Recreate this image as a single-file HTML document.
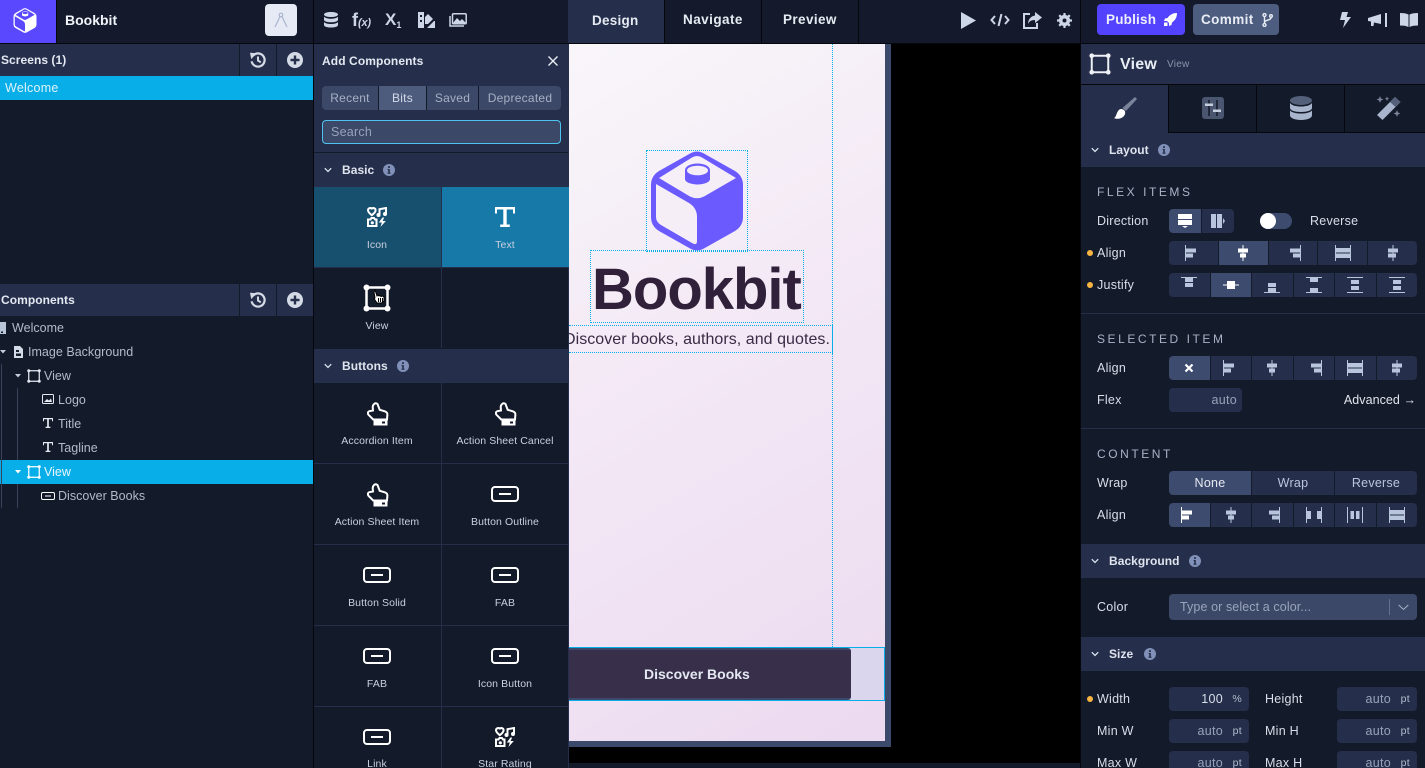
<!DOCTYPE html>
<html><head><meta charset="utf-8"><title>Bookbit</title>
<style>
*{box-sizing:border-box;margin:0;padding:0}
html,body{width:1425px;height:768px;overflow:hidden;background:#131a2a}
body{position:relative;font-family:"Liberation Sans",sans-serif;color:#d8deea;font-size:12.5px}
.a,.t,svg.p{position:absolute}
.t{white-space:nowrap;line-height:16px;letter-spacing:.25px}
.t.b{font-weight:700;letter-spacing:.05px}
.h{background:#252f4b;position:absolute}
.t.lbl{color:#a9b3c7;letter-spacing:2.55px;font-size:12px}
.seg{position:absolute;display:flex;gap:1px;border-radius:4px;overflow:hidden;height:24px;left:1169px;width:248px}
.seg>div{flex:1;background:#252f4b;display:flex;align-items:center;justify-content:center;color:#b9c5dc;font-size:12.5px;letter-spacing:.25px}
.seg>div.on{background:#3d4b6e;color:#fff}
.seg svg{width:16px;height:16px}
.inp{position:absolute;height:24px;background:#252f4b;border-radius:4px;color:#98a3b8;font-size:12.5px;line-height:25px;letter-spacing:.3px}
.inp span{position:absolute;top:0;white-space:nowrap}
.inp i{position:absolute;top:0;right:7px;font-style:normal;font-size:10.5px;color:#b4bccb}
.tl{position:absolute;width:128px;text-align:center;font-size:10.5px;letter-spacing:.1px;color:#c9d0de;line-height:14px}
.ln{position:absolute;background:#252f4b}
.dot{position:absolute;width:6px;height:6px;border-radius:3px;background:#f8b544;left:1087px}
.t.tr{color:#b3bbcb;letter-spacing:.02px}
</style></head><body>
<svg width="0" height="0" style="position:absolute"><defs>
<symbol id="hist" viewBox="0 0 18 18"><path d="M4 3.600A7.400 7.400 0 1 1 1.800 10.500" fill="none" stroke="currentColor" stroke-width="2.500"/><path d="M0 .8L7.500 1.400 1.400 8Z" fill="currentColor"/><path d="M9 5V9.600L12.200 11.600" fill="none" stroke="currentColor" stroke-width="2.200"/></symbol>
<symbol id="plus" viewBox="0 0 16 16"><path fill-rule="evenodd" d="M8 0a8 8 0 1 1 0 16A8 8 0 0 1 8 0ZM6.800 3.500V6.800H3.500V9.200H6.800V12.500H9.200V9.200H12.500V6.800H9.200V3.500Z" fill="currentColor"/></symbol>
<symbol id="info" viewBox="0 0 12 12"><path fill-rule="evenodd" d="M6 0a6 6 0 1 1 0 12A6 6 0 0 1 6 0ZM5 2.200V3.900H7V2.200ZM4.600 5V6H5.200V8.600H4.500V9.700H7.500V8.600H6.800V5Z" fill="#8090b8"/></symbol>
<symbol id="chev" viewBox="0 0 8 6"><path d="M.8 1.200L4 4.400 7.200 1.200" fill="none" stroke="#dde3ee" stroke-width="1.300"/></symbol>
<symbol id="view" viewBox="0 0 28 28"><rect x="3.500" y="3.500" width="21" height="21" fill="none" stroke="currentColor" stroke-width="2.500"/><circle cx="3.500" cy="3.500" r="3" fill="currentColor"/><circle cx="24.500" cy="3.500" r="3" fill="currentColor"/><circle cx="3.500" cy="24.500" r="3" fill="currentColor"/><circle cx="24.500" cy="24.500" r="3" fill="currentColor"/></symbol>
<symbol id="tee" viewBox="0 0 20 20"><path d="M0 0H20V6.500H18V2.500H11.700V17.500H14.800V20H5.200V17.500H8.300V2.500H2V6.500H0Z" fill="currentColor"/></symbol>
<symbol id="btn" viewBox="0 0 28 16"><rect x="1" y="1" width="26" height="14" rx="3" fill="none" stroke="#fff" stroke-width="2"/><rect x="8" y="7" width="12" height="2" fill="#fff"/></symbol>
<symbol id="hand" viewBox="0 0 22 24"><path d="M6 3.500Q8 0 10.500 2L12.700 7.800 17.800 9.300Q20.500 10.300 20.400 12.500L20 17.500H6.200L1.500 12.800Q0 10.500 2 9.300L6 8.500 5.700 5Z" fill="none" stroke="#fff" stroke-width="2"/><path fill-rule="evenodd" d="M6.500 17H20.500V23.500H6.500ZM15 19.500V21.500H18V19.500Z" fill="#fff"/></symbol>
<symbol id="icons" viewBox="0 0 20 20"><path d="M4.800 1.600C3 .4 1 1.400 1 3.300 1 5.300 3 6.800 4.800 8.200 6.600 6.800 8.600 5.300 8.600 3.300 8.600 1.400 6.600 .4 4.800 1.600Z" fill="none" stroke="#fff" stroke-width="2"/><path d="M12.500 8V2.200L19 1V7" fill="none" stroke="#fff" stroke-width="2"/><circle cx="11.500" cy="8" r="2" fill="#fff"/><circle cx="18" cy="7" r="2" fill="#fff"/><path d="M1 12.500H3.500L4.500 11H7L8 12.500H9.500V19H1Z" fill="none" stroke="#fff" stroke-width="2"/><circle cx="5.300" cy="15.800" r="1.600" fill="#fff"/><path d="M15.500 10.500L11.800 15.500H14.800L13.500 20 18.800 14H15.600L17.200 10.500Z" fill="#fff"/></symbol>
<symbol id="db" viewBox="0 0 16 16"><path d="M8 0C12 0 15 1 15 2.500S12 5 8 5 1 4 1 2.500 4 0 8 0ZM1 4.800C2 6 5 6.800 8 6.800S14 6 15 4.800V7.800C15 9.300 12 10.300 8 10.300S1 9.300 1 7.800ZM1 10C2 11.300 5 12 8 12S14 11.300 15 10V13C15 14.500 12 15.500 8 15.500S1 14.500 1 13Z" fill="currentColor"/></symbol>
<symbol id="cube" viewBox="0 0 92 100"><path fill-rule="evenodd" d="M40 2Q46-1 52 2L84 20Q92 25 92 34V66Q92 75 84 80L52 98Q46 101 40 98L8 80Q0 75 0 66V34Q0 25 8 20ZM41 6.500L8 27 39 45.500Q46 49 53 45.500L85 27 51 6.500Q46 3.500 41 6.500ZM5 33V66Q5 71 10 74L41 92Q46 95 46 90V66Q46 57 38 52Z" fill="currentColor"/><path d="M34 19A12.500 6.500 0 0 1 59 19V28C59 31.500 52 33.500 46.500 33.500S34 31.500 34 28Z" fill="currentColor"/><ellipse cx="46.500" cy="19.500" rx="10.500" ry="4.800" fill="var(--c,#f6eef7)"/></symbol>
<symbol id="a1" viewBox="0 0 16 16"><rect x="0" width="1" height="16" fill="currentColor"/><rect x="1" y="3.500" width="10" height="4" fill="currentColor"/><rect x="1" y="8.500" width="7" height="4" fill="currentColor"/></symbol>
<symbol id="a2" viewBox="0 0 16 16"><rect x="7.500" width="1" height="16" fill="currentColor"/><rect x="3" y="3.500" width="10" height="4" fill="currentColor"/><rect x="5" y="8.500" width="6" height="4" fill="currentColor"/></symbol>
<symbol id="a3" viewBox="0 0 16 16"><rect x="15" width="1" height="16" fill="currentColor"/><rect x="5" y="3.500" width="10" height="4" fill="currentColor"/><rect x="8" y="8.500" width="7" height="4" fill="currentColor"/></symbol>
<symbol id="a4" viewBox="0 0 16 16"><rect y="0" width="1" height="16" fill="currentColor"/><rect x="15" width="1" height="16" fill="currentColor"/><rect x="1" y="3" width="14" height="4.500" fill="currentColor"/><rect x="1" y="8.500" width="14" height="4.500" fill="currentColor"/></symbol>
<symbol id="a5" viewBox="0 0 16 16"><rect x="7.500" width="1" height="16" fill="currentColor"/><rect x="3" y="3.500" width="10" height="4" fill="currentColor"/><rect x="3" y="8.500" width="8" height="4" fill="currentColor"/></symbol>
<symbol id="j1" viewBox="0 0 16 16"><rect y="0" width="16" height="1" fill="currentColor"/><rect x="4" y="1" width="8" height="4" fill="currentColor"/><rect x="4" y="6" width="8" height="4" fill="currentColor"/></symbol>
<symbol id="j2" viewBox="0 0 16 16"><rect y="7.500" width="16" height="1" fill="currentColor"/><rect x="4" y="4" width="8" height="8" fill="currentColor"/></symbol>
<symbol id="j3" viewBox="0 0 16 16"><rect y="15" width="16" height="1" fill="currentColor"/><rect x="4" y="6" width="8" height="4" fill="currentColor"/><rect x="4" y="11" width="8" height="4" fill="currentColor"/></symbol>
<symbol id="j4" viewBox="0 0 16 16"><rect y="0" width="16" height="1" fill="currentColor"/><rect y="15" width="16" height="1" fill="currentColor"/><rect x="4" y="1" width="8" height="4" fill="currentColor"/><rect x="4" y="11" width="8" height="4" fill="currentColor"/></symbol>
<symbol id="j5" viewBox="0 0 16 16"><rect y="0" width="16" height="1" fill="currentColor"/><rect y="15" width="16" height="1" fill="currentColor"/><rect x="4" y="3" width="8" height="4" fill="currentColor"/><rect x="4" y="9" width="8" height="4" fill="currentColor"/></symbol>
<symbol id="c4" viewBox="0 0 16 16"><rect y="0" width="1" height="16" fill="currentColor"/><rect x="15" width="1" height="16" fill="currentColor"/><rect x="1" y="4" width="4" height="8" fill="currentColor"/><rect x="11" y="4" width="4" height="8" fill="currentColor"/></symbol>
<symbol id="c5" viewBox="0 0 16 16"><rect y="0" width="1" height="16" fill="currentColor"/><rect x="15" width="1" height="16" fill="currentColor"/><rect x="3.500" y="4" width="3.500" height="8" fill="currentColor"/><rect x="9" y="4" width="3.500" height="8" fill="currentColor"/></symbol>
</defs></svg>

<!-- top bar -->
<div class="a" style="left:0;top:0;width:1425px;height:43px;background:#141a2b"></div>
<div class="a" style="left:0;top:43px;width:1425px;height:1px;background:#05070c"></div>
<div class="a" style="left:0;top:0;width:56px;height:43px;background:#5a48ff"></div>
<div class="a" style="left:56px;top:0;width:1px;height:43px;background:#05070c"></div>
<svg class="p" style="left:13px;top:8px;color:#fff;--c:#5a48ff" width="24" height="25"><use href="#cube"/></svg>
<div class="t b" style="left:65px;top:12px;font-size:14px;color:#f1f4f9;letter-spacing:0">Bookbit</div>
<div class="a" style="left:265px;top:4px;width:32px;height:32px;background:#e5eaf4;border-radius:4px"></div>
<svg class="p" style="left:274px;top:12px" width="14" height="16" viewBox="0 0 14 16"><circle cx="7" cy="3" r="1.800" fill="none" stroke="#aab6ce" stroke-width="1.200"/><path d="M6 4.500L1 15M8 4.500L13 15" stroke="#aab6ce" stroke-width="1.200" fill="none"/></svg>
<div class="a" style="left:313px;top:0;width:1px;height:768px;background:#05070c"></div>

<!-- mid toolbar icons -->
<svg class="p" style="left:323px;top:12px;color:#ccd6e6" width="16" height="16"><use href="#db"/></svg>
<div class="t b" style="left:352px;top:12px;font-size:18px;color:#ccd6e6;letter-spacing:0">f<span style="font-size:11px;font-style:italic;letter-spacing:-.2px">(x)</span></div>
<div class="t b" style="left:385px;top:12px;font-size:17px;color:#ccd6e6;letter-spacing:0">X<span style="font-size:9px;vertical-align:-3px">1</span></div>
<svg class="p" style="left:418px;top:12px" width="17" height="16" viewBox="0 0 17 16"><path fill-rule="evenodd" d="M0 0H6V16H0ZM2 3V5H4V3ZM2 8V10H4V8Z" fill="#ccd6e6"/><path d="M7 5L10 2 15 7 10 12H7ZM9 16L16 9H17V16Z" fill="#ccd6e6"/></svg>
<svg class="p" style="left:449px;top:13px" width="18" height="14" viewBox="0 0 18 14"><path d="M1 3V13H15" fill="none" stroke="#ccd6e6" stroke-width="1.500"/><rect x="3.500" y=".8" width="13.700" height="10" rx="1" fill="none" stroke="#ccd6e6" stroke-width="1.500"/><path d="M4 10L8 5 11 8 13 6 17 10Z" fill="#ccd6e6"/></svg>

<!-- tabs -->
<div class="a" style="left:568px;top:0;width:96px;height:43px;background:#252f4b"></div>
<div class="a" style="left:664px;top:0;width:1px;height:43px;background:#05070c"></div>
<div class="a" style="left:761px;top:0;width:1px;height:43px;background:#05070c"></div>
<div class="a" style="left:858px;top:0;width:1px;height:43px;background:#05070c"></div>
<div class="t b" style="left:592px;top:13px;font-size:13.500px;color:#e6eaf2;letter-spacing:.25px">Design</div>
<div class="t b" style="left:683px;top:12px;font-size:13.500px;color:#e6eaf2;letter-spacing:.45px">Navigate</div>
<div class="t b" style="left:783px;top:12px;font-size:13.500px;color:#e6eaf2;letter-spacing:.4px">Preview</div>

<!-- top right -->
<svg class="p" style="left:961px;top:12px" width="15" height="17"><path d="M0 0L15 8.500 0 17Z" fill="#ccd6e6"/></svg>
<svg class="p" style="left:990px;top:13px" width="20" height="14" viewBox="0 0 20 14" fill="none" stroke="#ccd6e6" stroke-width="2"><path d="M5 3L1.500 7 5 11M15 3L18.500 7 15 11M11.500 1L8.500 13"/></svg>
<svg class="p" style="left:1023px;top:12px" width="19" height="17" viewBox="0 0 19 17"><path d="M7 2H1V16H14V11" fill="none" stroke="#ccd6e6" stroke-width="2"/><path d="M12 0L19 5.500 12 11V8C8 8 6 9.500 5 12 5 7.500 8 4 12 3.500Z" fill="#ccd6e6"/></svg>
<svg class="p" style="left:1057px;top:13px" width="15" height="15" viewBox="0 0 15 15"><circle cx="7.500" cy="7.500" r="4.200" fill="none" stroke="#ccd6e6" stroke-width="2.800"/><path d="M7.500 0V15M0 7.500H15M2.200 2.200L12.800 12.800M12.800 2.200L2.200 12.800" stroke="#ccd6e6" stroke-width="2.200"/><circle cx="7.500" cy="7.500" r="2" fill="#141a2b"/></svg>
<div class="a" style="left:1080px;top:0;width:1px;height:43px;background:#05070c"></div>
<div class="a" style="left:1097px;top:4px;width:88px;height:31px;background:#5343ff;border-radius:4px"></div>
<div class="t b" style="left:1106px;top:12px;font-size:13.500px;color:#eef0fb;letter-spacing:.2px">Publish</div>
<svg class="p" style="left:1164px;top:13px" width="13" height="13" viewBox="0 0 13 13"><path d="M13 0C9 0 6 1.500 3.500 5L1 5.500 0 8H3L5 10V13L7.500 12 8 9.500C11.500 7 13 4 13 0Z" fill="#fff"/><rect x="0" y="9.500" width="3.500" height="3.500" fill="#fff"/></svg>
<div class="a" style="left:1193px;top:4px;width:86px;height:31px;background:#4d5d80;border-radius:4px"></div>
<div class="t b" style="left:1201px;top:12px;font-size:13.500px;color:#e8ecf3;letter-spacing:.4px">Commit</div>
<svg class="p" style="left:1262px;top:13px" width="11" height="14" viewBox="0 0 11 14" fill="none" stroke="#e8ecf3" stroke-width="1.400"><circle cx="2.500" cy="2" r="1.500"/><circle cx="2.500" cy="12" r="1.500"/><circle cx="9" cy="3" r="1.300"/><path d="M2.500 3.500V10.500M9 4.500C9 7.500 4 6.500 2.500 9"/></svg>
<svg class="p" style="left:1340px;top:12px" width="11" height="16" viewBox="0 0 11 16"><path d="M2 0H8L6.500 5H11L3 16 5 8H0Z" fill="#ccd6e6"/></svg>
<svg class="p" style="left:1368px;top:13px" width="19" height="14" viewBox="0 0 19 14"><path d="M0 5L13 1V11L6 9.500 5.500 13H3L3 8.500 0 8Z" fill="#ccd6e6"/><rect x="17" y="0" width="2" height="14" fill="#ccd6e6"/></svg>
<svg class="p" style="left:1400px;top:13px" width="18" height="14" viewBox="0 0 18 14"><path d="M0 0C3 0 6 .3 8.500 1.500V14C6 12.800 3 12.500 0 12.500ZM18 0C15 0 12 .3 9.500 1.500V14C12 12.800 15 12.500 18 12.500Z" fill="#ccd6e6"/></svg>

<!-- left panel -->
<div class="h" style="left:0;top:44px;width:313px;height:32px"></div>
<div class="a" style="left:239px;top:44px;width:1px;height:32px;background:#131a2a"></div>
<div class="a" style="left:276px;top:44px;width:1px;height:32px;background:#131a2a"></div>
<div class="t b" style="left:1px;top:52px;font-size:12px;color:#e3e8f1">Screens (1)</div>
<svg class="p" style="left:250px;top:52px;color:#d5dbe6" width="16" height="16"><use href="#hist"/></svg>
<svg class="p" style="left:287px;top:52px;color:#d5dbe6" width="16" height="16"><use href="#plus"/></svg>
<div class="a" style="left:0;top:76px;width:313px;height:24px;background:#08aee8"></div>
<div class="t" style="left:5px;top:80px;color:#dff3fb">Welcome</div>

<div class="h" style="left:0;top:284px;width:313px;height:32px"></div>
<div class="a" style="left:239px;top:284px;width:1px;height:32px;background:#131a2a"></div>
<div class="a" style="left:276px;top:284px;width:1px;height:32px;background:#131a2a"></div>
<div class="t b" style="left:1px;top:292px;font-size:12px;color:#e3e8f1">Components</div>
<svg class="p" style="left:250px;top:292px;color:#d5dbe6" width="16" height="16"><use href="#hist"/></svg>
<svg class="p" style="left:287px;top:292px;color:#d5dbe6" width="16" height="16"><use href="#plus"/></svg>

<div class="a" style="left:0;top:460px;width:313px;height:24px;background:#08aee8"></div>
<div class="a" style="left:1px;top:364px;width:1px;height:144px;background:#39445c"></div>
<div class="a" style="left:17px;top:388px;width:1px;height:72px;background:#39445c"></div>
<div class="a" style="left:17px;top:484px;width:1px;height:24px;background:#39445c"></div>

<svg class="p" style="left:-1px;top:322px" width="7" height="12" viewBox="0 0 7 12"><path d="M0 0H7V12H0Z" fill="#b8c4d8"/><rect x="2" y="9.500" width="2" height="1.500" fill="#131a2a"/></svg>
<div class="t tr" style="left:12px;top:320px">Welcome</div>
<svg class="p" style="left:0;top:350px" width="7" height="4"><path d="M0 0H6L3 3.500Z" fill="#c5cddc"/></svg>
<svg class="p" style="left:14px;top:346px" width="9" height="12" viewBox="0 0 9 12"><path fill-rule="evenodd" d="M0 0H6L9 3V12H0ZM2 4V6H5V4ZM2 7.500V10H7V7.500Z" fill="#d4dbe8"/></svg>
<div class="t tr" style="left:28px;top:344px">Image Background</div>
<svg class="p" style="left:15px;top:374px" width="7" height="4"><path d="M0 0H6L3 3.500Z" fill="#c5cddc"/></svg>
<svg class="p" style="left:27px;top:369px;color:#e4e9f2" width="14" height="14"><use href="#view"/></svg>
<div class="t tr" style="left:44px;top:368px">View</div>
<svg class="p" style="left:42px;top:394px" width="12" height="10" viewBox="0 0 12 10"><rect x=".5" y=".5" width="11" height="9" rx="1" fill="none" stroke="#e4e9f2"/><path d="M2 8L5 5 7 6.500 9 4.500 10 8Z" fill="#e4e9f2"/></svg>
<div class="t tr" style="left:58px;top:392px">Logo</div>
<svg class="p" style="left:43px;top:418px;color:#e4e9f2" width="10" height="10"><use href="#tee"/></svg>
<div class="t tr" style="left:58px;top:416px">Title</div>
<svg class="p" style="left:43px;top:442px;color:#e4e9f2" width="10" height="10"><use href="#tee"/></svg>
<div class="t tr" style="left:58px;top:440px">Tagline</div>
<svg class="p" style="left:15px;top:470px" width="7" height="4"><path d="M0 0H6L3 3.500Z" fill="#fff"/></svg>
<svg class="p" style="left:27px;top:465px;color:#fff" width="14" height="14"><use href="#view"/></svg>
<div class="t" style="left:44px;top:464px;color:#e8f7fd;letter-spacing:0">View</div>
<svg class="p" style="left:41px;top:492px" width="14" height="8"><use href="#btn"/></svg>
<div class="t tr" style="left:58px;top:488px">Discover Books</div>

<!-- canvas -->
<div class="a" style="left:569px;top:44px;width:512px;height:719px;background:#000"></div>
<div class="a" style="left:569px;top:763px;width:512px;height:5px;background:#131a2a"></div>
<div class="a" style="left:569px;top:44px;width:322px;height:703px;background:#3b4a6b"></div>
<div class="a" style="left:569px;top:44px;width:316px;height:697px;background:linear-gradient(150deg,#f9f6fa 0%,#f3e8f5 45%,#ecdaf0 100%)"></div>
<svg class="p" style="left:651px;top:151px;color:#6b5bff;--c:#f6eef7" width="92" height="100"><use href="#cube"/></svg>
<div class="a" style="left:646px;top:150px;width:102px;height:102px;border:1px dotted #08aee8"></div>
<div class="a" style="left:590px;top:250px;width:214px;height:73px;border:1px dotted #08aee8"></div>
<div class="t b" style="left:592px;top:257px;font-size:58px;line-height:66px;letter-spacing:-1px;color:#31203a">Bookbit</div>
<div class="a" style="left:569px;top:325px;width:264px;height:28px;border-top:1px dotted #08aee8;border-bottom:1px dotted #08aee8;border-right:1px solid #08aee8"></div>
<div class="t" style="left:564px;top:332px;font-size:16px;letter-spacing:.05px;color:#3a2a45">Discover books, authors, and quotes.</div>
<div class="a" style="left:832px;top:44px;width:1px;height:281px;border-left:1px dotted #08aee8"></div>
<div class="a" style="left:832px;top:353px;width:1px;height:294px;border-left:1px dotted #08aee8"></div>
<div class="a" style="left:569px;top:647px;width:316px;height:54px;background:#d9d6ee;border:1px solid #08aee8;border-left:0"></div>
<div class="a" style="left:569px;top:648px;width:282px;height:52px;background:#38304b;border-top:2px solid #3b4a6b;border-bottom:2px solid #3b4a6b;border-radius:0 3px 3px 0"></div>
<div class="t b" style="left:644px;top:666px;font-size:14px;color:#e4e8f2;letter-spacing:0">Discover Books</div>

<!-- add components panel -->
<div class="a" style="left:314px;top:44px;width:254px;height:724px;background:#131a2a"></div>
<div class="a" style="left:568px;top:44px;width:1px;height:724px;background:#252f4b"></div>
<div class="h" style="left:314px;top:44px;width:254px;height:108px"></div>
<div class="t b" style="left:322px;top:53px;font-size:12px;color:#e3e8f1;letter-spacing:.1px">Add Components</div>
<svg class="p" style="left:548px;top:56px" width="10" height="10"><path d="M.5 .5L9.500 9.500M9.500 .5L.5 9.500" stroke="#e8ecf3" stroke-width="1.400"/></svg>
<div class="a" style="left:322px;top:86px;width:239px;height:24px;display:flex;gap:1px;border-radius:4px;overflow:hidden;font-size:12px;color:#a6b0c4;line-height:24px;text-align:center;letter-spacing:.25px;background:#131a2a">
<div style="width:56px;background:#3b4868">Recent</div><div style="width:47px;background:#4d5b7d;color:#d5dbe7">Bits</div><div style="width:51px;background:#3b4868">Saved</div><div style="flex:1;background:#3b4868">Deprecated</div></div>
<div class="a" style="left:322px;top:120px;width:239px;height:24px;border:1px solid #4fc3ef;border-radius:4px;background:#3b4868"></div>
<div class="t" style="left:331px;top:124px;color:#98a3ba">Search</div>

<div class="a" style="left:314px;top:152px;width:254px;height:1px;background:#131a2a"></div>
<div class="h" style="left:314px;top:153px;width:254px;height:34px"></div>
<svg class="p" style="left:324px;top:167px" width="8" height="6"><use href="#chev"/></svg>
<div class="t b" style="left:342px;top:162px;font-size:12px;color:#dfe4ee">Basic</div>
<svg class="p" style="left:383px;top:164px" width="12" height="12"><use href="#info"/></svg>

<div class="a" style="left:314px;top:187px;width:127px;height:80px;background:#174f6f"></div>
<div class="a" style="left:442px;top:187px;width:127px;height:80px;background:#1679a8"></div>
<div class="ln" style="left:441px;top:187px;width:1px;height:161px"></div>
<div class="ln" style="left:314px;top:267px;width:254px;height:1px"></div>
<svg class="p" style="left:367px;top:207px" width="20" height="20"><use href="#icons"/></svg>
<div class="tl" style="left:313px;top:238px">Icon</div>
<svg class="p" style="left:495px;top:207px;color:#fff" width="20" height="20"><use href="#tee"/></svg>
<div class="tl" style="left:441px;top:238px">Text</div>
<svg class="p" style="left:363px;top:284px;color:#fff" width="28" height="28"><use href="#view"/></svg>
<svg class="p" style="left:372px;top:289px" width="14" height="15" viewBox="0 0 14 15"><path d="M3 1L5 7 6 6 7 7 8 6.500 9 7.500 10.500 7 12 8 12 12 9.500 14 5 14 2 9.500 3 9 2 3Z" fill="#fff" stroke="#000"/><path d="M6.500 9V13M8.500 9V13M10.500 9V13" stroke="#000"/></svg>
<div class="tl" style="left:313px;top:319px">View</div>

<div class="h" style="left:314px;top:349px;width:254px;height:34px"></div>
<svg class="p" style="left:324px;top:363px" width="8" height="6"><use href="#chev"/></svg>
<div class="t b" style="left:342px;top:358px;font-size:12px;color:#dfe4ee">Buttons</div>
<svg class="p" style="left:397px;top:360px" width="12" height="12"><use href="#info"/></svg>

<div class="ln" style="left:441px;top:383px;width:1px;height:385px"></div>
<div class="ln" style="left:314px;top:463px;width:254px;height:1px"></div>
<div class="ln" style="left:314px;top:544px;width:254px;height:1px"></div>
<div class="ln" style="left:314px;top:625px;width:254px;height:1px"></div>
<div class="ln" style="left:314px;top:706px;width:254px;height:1px"></div>

<svg class="p" style="left:367px;top:402px" width="22" height="24"><use href="#hand"/></svg>
<div class="tl" style="left:313px;top:434px">Accordion Item</div>
<svg class="p" style="left:495px;top:402px" width="22" height="24"><use href="#hand"/></svg>
<div class="tl" style="left:441px;top:434px">Action Sheet Cancel</div>
<svg class="p" style="left:367px;top:483px" width="22" height="24"><use href="#hand"/></svg>
<div class="tl" style="left:313px;top:515px">Action Sheet Item</div>
<svg class="p" style="left:491px;top:486px" width="28" height="16"><use href="#btn"/></svg>
<div class="tl" style="left:441px;top:515px">Button Outline</div>
<svg class="p" style="left:363px;top:567px" width="28" height="16"><use href="#btn"/></svg>
<div class="tl" style="left:313px;top:596px">Button Solid</div>
<svg class="p" style="left:491px;top:567px" width="28" height="16"><use href="#btn"/></svg>
<div class="tl" style="left:441px;top:596px">FAB</div>
<svg class="p" style="left:363px;top:648px" width="28" height="16"><use href="#btn"/></svg>
<div class="tl" style="left:313px;top:677px">FAB</div>
<svg class="p" style="left:491px;top:648px" width="28" height="16"><use href="#btn"/></svg>
<div class="tl" style="left:441px;top:677px">Icon Button</div>
<svg class="p" style="left:363px;top:729px" width="28" height="16"><use href="#btn"/></svg>
<div class="tl" style="left:313px;top:757px">Link</div>
<svg class="p" style="left:495px;top:727px" width="20" height="20"><use href="#icons"/></svg>
<div class="tl" style="left:441px;top:757px">Star Rating</div>

<!-- right panel -->
<div class="a" style="left:1081px;top:44px;width:344px;height:724px;background:#131a2a"></div>
<div class="a" style="left:1080px;top:0;width:1px;height:768px;background:#05070c"></div>
<div class="h" style="left:1081px;top:44px;width:344px;height:40px"></div>
<svg class="p" style="left:1089px;top:53px;color:#eef1f6" width="22" height="22"><use href="#view"/></svg>
<div class="t b" style="left:1120px;top:57px;font-size:16px;color:#e8ecf3;letter-spacing:.2px">View</div>
<div class="t" style="left:1167px;top:57px;font-size:10px;color:#8a94aa">View</div>
<div class="a" style="left:1081px;top:84px;width:344px;height:1px;background:#05070c"></div>
<div class="h" style="left:1081px;top:85px;width:87px;height:48px"></div>
<div class="a" style="left:1168px;top:85px;width:1px;height:48px;background:#05070c"></div>
<div class="a" style="left:1256px;top:85px;width:1px;height:48px;background:#05070c"></div>
<div class="a" style="left:1344px;top:85px;width:1px;height:48px;background:#05070c"></div>
<div class="a" style="left:1169px;top:132px;width:256px;height:1px;background:#05070c"></div>
<svg class="p" style="left:1113px;top:96px" width="25" height="24" viewBox="0 0 25 24"><path d="M22 1L24 3 13 15 9.500 12Z" fill="#7a8399"/><path d="M8 13C10.500 13 13 15 12 18 11 22 5 24 1 22 3 21 3 19 4 17 5 14.500 6.500 13 8 13Z" fill="#fff"/></svg>
<svg class="p" style="left:1202px;top:97px" width="22" height="22" viewBox="0 0 22 22"><rect width="22" height="22" rx="3" fill="#4a5670"/><rect x="6" y="3" width="2" height="16" fill="#141a2b" opacity=".75"/><rect x="14" y="3" width="2" height="16" fill="#141a2b" opacity=".75"/><rect x="3" y="6.500" width="8" height="2.500" fill="#c5cedd"/><rect x="11" y="12.500" width="8" height="2.500" fill="#c5cedd"/></svg>
<svg class="p" style="left:1290px;top:96px" width="22" height="24" viewBox="0 0 22 24"><ellipse cx="11" cy="4.500" rx="11" ry="4.500" fill="#55617b"/><path d="M0 7C2 9.500 6 10.500 11 10.500S20 9.500 22 7V12C22 14.500 17 16 11 16S0 14.500 0 12Z" fill="#a8b5cc"/><path d="M0 14.500C2 16.500 6 17.500 11 17.500S20 16.500 22 14.500V19.500C22 22 17 24 11 24S0 22 0 19.500Z" fill="#a8b5cc"/></svg>
<svg class="p" style="left:1377px;top:96px" width="25" height="24" viewBox="0 0 25 24"><path d="M0 19L18 1 23.500 6 5.500 24Z" fill="#a8b5cc"/><path d="M13 6L18 1 23.500 6 18.500 11Z" fill="#55617b"/><path d="M3 0L4 2.500 6.500 3.500 4 4.500 3 7 2 4.500-.5 3.500 2 2.500ZM10 .5L10.700 2 12 2.700 10.700 3.400 10 5 9.300 3.400 8 2.700 9.300 2ZM20 14L21 16.500 23.500 17.500 21 18.500 20 21 19 18.500 16.500 17.500 19 16.500Z" fill="#7a8399"/></svg>

<div class="h" style="left:1081px;top:133px;width:344px;height:34px"></div>
<svg class="p" style="left:1091px;top:147px" width="8" height="6"><use href="#chev"/></svg>
<div class="t b" style="left:1109px;top:142px;font-size:12px;color:#dfe4ee">Layout</div>
<svg class="p" style="left:1158px;top:144px" width="12" height="12"><use href="#info"/></svg>

<div class="t lbl" style="left:1097px;top:184px">FLEX ITEMS</div>
<div class="t" style="left:1097px;top:213px">Direction</div>
<div class="seg" style="top:209px;width:65px"><div class="on"><svg viewBox="0 0 16 16"><rect x="1" y="1" width="14" height="5" fill="#fff"/><rect x="1" y="7" width="14" height="5" fill="#fff"/><path d="M5 13H11L8 15Z" fill="#fff"/></svg></div><div><svg viewBox="0 0 16 16"><rect x="1" y="1" width="5" height="14" fill="#b9c5dc"/><rect x="7" y="1" width="5" height="14" fill="#b9c5dc"/><path d="M13 5V11L15 8Z" fill="#b9c5dc"/></svg></div></div>
<div class="a" style="left:1260px;top:213px;width:32px;height:16px;border-radius:8px;background:#3d4b6e"></div>
<div class="a" style="left:1260px;top:213px;width:16px;height:16px;border-radius:8px;background:#fff"></div>
<div class="t" style="left:1310px;top:213px">Reverse</div>

<div class="dot" style="top:250px"></div>
<div class="t" style="left:1097px;top:245px">Align</div>
<div class="seg" style="top:241px"><div><svg><use href="#a1"/></svg></div><div class="on"><svg><use href="#a2"/></svg></div><div><svg><use href="#a3"/></svg></div><div><svg><use href="#a4"/></svg></div><div><svg><use href="#a5"/></svg></div></div>
<div class="dot" style="top:282px"></div>
<div class="t" style="left:1097px;top:277px">Justify</div>
<div class="seg" style="top:273px"><div><svg><use href="#j1"/></svg></div><div class="on"><svg><use href="#j2"/></svg></div><div><svg><use href="#j3"/></svg></div><div><svg><use href="#j4"/></svg></div><div><svg><use href="#j5"/></svg></div><div><svg><use href="#j5"/></svg></div></div>
<div class="ln" style="left:1081px;top:313px;width:344px;height:1px"></div>

<div class="t lbl" style="left:1097px;top:331px">SELECTED ITEM</div>
<div class="t" style="left:1097px;top:360px">Align</div>
<div class="seg" style="top:356px"><div class="on"><svg viewBox="0 0 16 16"><path d="M4.500 4.500L11.500 11.500M11.500 4.500L4.500 11.500" stroke="#fff" stroke-width="2.200"/></svg></div><div><svg><use href="#a1"/></svg></div><div><svg><use href="#a2"/></svg></div><div><svg><use href="#a3"/></svg></div><div><svg><use href="#a4"/></svg></div><div><svg><use href="#a5"/></svg></div></div>
<div class="t" style="left:1097px;top:392px">Flex</div>
<div class="inp" style="left:1169px;top:388px;width:73px"><span style="right:5px">auto</span></div>
<div class="t" style="right:9px;top:392px;color:#e0e5ee;letter-spacing:.05px">Advanced →</div>
<div class="ln" style="left:1081px;top:428px;width:344px;height:1px"></div>

<div class="t lbl" style="left:1097px;top:446px">CONTENT</div>
<div class="t" style="left:1097px;top:475px">Wrap</div>
<div class="seg" style="top:471px"><div class="on" style="color:#e6eaf2">None</div><div>Wrap</div><div>Reverse</div></div>
<div class="t" style="left:1097px;top:507px">Align</div>
<div class="seg" style="top:503px"><div class="on"><svg><use href="#a1"/></svg></div><div><svg><use href="#a2"/></svg></div><div><svg><use href="#a3"/></svg></div><div><svg><use href="#c4"/></svg></div><div><svg><use href="#c5"/></svg></div><div><svg><use href="#a4"/></svg></div></div>

<div class="h" style="left:1081px;top:544px;width:344px;height:34px"></div>
<svg class="p" style="left:1091px;top:558px" width="8" height="6"><use href="#chev"/></svg>
<div class="t b" style="left:1109px;top:553px;font-size:12px;color:#dfe4ee">Background</div>
<svg class="p" style="left:1189px;top:555px" width="12" height="12"><use href="#info"/></svg>
<div class="t" style="left:1097px;top:599px">Color</div>
<div class="a" style="left:1169px;top:594px;width:248px;height:26px;background:#3b4868;border-radius:4px"></div>
<div class="t" style="left:1180px;top:599px;color:#9aa5bb;letter-spacing:.1px">Type or select a color...</div>
<div class="a" style="left:1389px;top:599px;width:1px;height:16px;background:#66728c"></div>
<svg class="p" style="left:1398px;top:604px" width="11" height="7"><path d="M.7 1L5.500 5.500 10.300 1" fill="none" stroke="#a8b2c6"/></svg>

<div class="h" style="left:1081px;top:637px;width:344px;height:34px"></div>
<svg class="p" style="left:1091px;top:651px" width="8" height="6"><use href="#chev"/></svg>
<div class="t b" style="left:1109px;top:646px;font-size:12px;color:#dfe4ee">Size</div>
<svg class="p" style="left:1144px;top:648px" width="12" height="12"><use href="#info"/></svg>

<div class="dot" style="top:696px"></div>
<div class="t" style="left:1097px;top:691px">Width</div>
<div class="inp" style="left:1169px;top:687px;width:80px;color:#d8deea"><span style="right:26px">100</span><i>%</i></div>
<div class="t" style="left:1265px;top:691px">Height</div>
<div class="inp" style="left:1337px;top:687px;width:80px"><span style="right:26px">auto</span><i>pt</i></div>
<div class="t" style="left:1097px;top:723px">Min W</div>
<div class="inp" style="left:1169px;top:719px;width:80px"><span style="right:26px">auto</span><i>pt</i></div>
<div class="t" style="left:1265px;top:723px">Min H</div>
<div class="inp" style="left:1337px;top:719px;width:80px"><span style="right:26px">auto</span><i>pt</i></div>
<div class="t" style="left:1097px;top:755px">Max W</div>
<div class="inp" style="left:1169px;top:751px;width:80px"><span style="right:26px">auto</span><i>pt</i></div>
<div class="t" style="left:1265px;top:755px">Max H</div>
<div class="inp" style="left:1337px;top:751px;width:80px"><span style="right:26px">auto</span><i>pt</i></div>
</body></html>
